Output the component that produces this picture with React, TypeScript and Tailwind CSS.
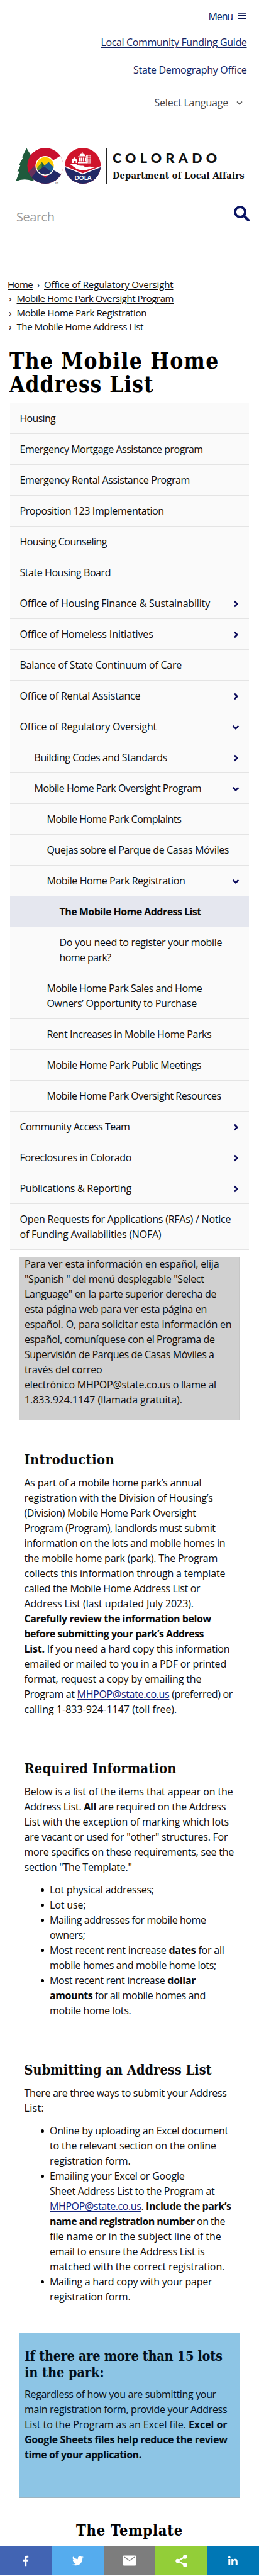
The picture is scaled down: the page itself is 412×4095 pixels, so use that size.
import { useLayoutEffect, useRef, useState } from "react";
import type { ReactNode } from "react";

/** One line of copy whose tracking is adjusted so that it fills its measure. */
function Line({ w, children, className = "" }: { w: number; children: ReactNode; className?: string }) {
  const ref = useRef<HTMLSpanElement>(null);
  const [spacing, setSpacing] = useState(0);
  useLayoutEffect(() => {
    const el = ref.current;
    if (!el) return;
    const letters = (el.textContent ?? "").length;
    setSpacing((w + 1.5 - el.getBoundingClientRect().width) / letters);
  }, [w]);
  return (
    <span className={`block whitespace-nowrap ${className}`}>
      <span ref={ref} style={{ letterSpacing: `${spacing}px` }}>
        {children}
      </span>
    </span>
  );
}

type Row = {
  level: 0 | 1 | 2 | 3;
  lines: [string, number][];
  arrow?: "right" | "down";
  active?: boolean;
  plain?: boolean;
};

const rows: Row[] = [
  { level: 0, lines: [["Housing", 55]] },
  { level: 0, lines: [["Emergency Mortgage Assistance program", 289.7]] },
  { level: 0, lines: [["Emergency Rental Assistance Program", 269]] },
  { level: 0, lines: [["Proposition 123 Implementation", 227.7]] },
  { level: 0, lines: [["Housing Counseling", 137]] },
  { level: 0, lines: [["State Housing Board", 143]] },
  { level: 0, lines: [["Office of Housing Finance & Sustainability", 301]], arrow: "right" },
  { level: 0, lines: [["Office of Homeless Initiatives", 210.7]], arrow: "right" },
  { level: 0, lines: [["Balance of State Continuum of Care", 256]] },
  { level: 0, lines: [["Office of Rental Assistance", 190.3]], arrow: "right" },
  { level: 0, lines: [["Office of Regulatory Oversight", 216]], arrow: "down" },
  { level: 1, lines: [["Building Codes and Standards", 209.7]], arrow: "right" },
  { level: 1, lines: [["Mobile Home Park Oversight Program", 264]], arrow: "down" },
  { level: 2, lines: [["Mobile Home Park Complaints", 212.3]] },
  { level: 2, lines: [["Quejas sobre el Parque de Casas Móviles", 288]] },
  { level: 2, lines: [["Mobile Home Park Registration", 218.3]], arrow: "down", plain: true },
  { level: 3, lines: [["The Mobile Home Address List", 223.7]], active: true },
  { level: 3, lines: [["Do you need to register your mobile", 257.3], ["home park?", 80.7]] },
  { level: 2, lines: [["Mobile Home Park Sales and Home", 245.3], ["Owners’ Opportunity to Purchase", 237]] },
  { level: 2, lines: [["Rent Increases in Mobile Home Parks", 260.3]] },
  { level: 2, lines: [["Mobile Home Park Public Meetings", 244]] },
  { level: 2, lines: [["Mobile Home Park Oversight Resources", 275.7]] },
  { level: 0, lines: [["Community Access Team", 173.3]], arrow: "right" },
  { level: 0, lines: [["Foreclosures in Colorado", 176]], arrow: "right" },
  { level: 0, lines: [["Publications & Reporting", 176]], arrow: "right" },
  { level: 0, lines: [["Open Requests for Applications (RFAs) / Notice", 334.3], ["of Funding Availabilities (NOFA)", 223.3]] },
];

const indent = ["pl-[15.5px]", "pl-[38.5px]", "pl-[58.5px]", "pl-[78.5px]"];

function Arrow({ dir }: { dir: "right" | "down" }) {
  return (
    <svg className="mt-[7px] mr-[15px] h-3 w-3 shrink-0" viewBox="0 0 12 12" fill="none" stroke="#0c0c5c" strokeWidth="2.6">
      {dir === "right" ? <path d="M4 1.6 8.2 6 4 10.4" /> : <path d="M1.6 4 6 8.2 10.4 4" />}
    </svg>
  );
}

function NavRow({ row }: { row: Row }) {
  const bg = row.active ? "bg-[#e5e7ef] font-bold" : "bg-[#fafafa]";
  const border = row.plain ? "border-[#fafafa]" : "border-[#e4e4e4]";
  return (
    <li className={`flex justify-between border-b pt-[12px] pb-[12px] ${indent[row.level]} ${bg} ${border}`}>
      <a>
        {row.lines.map(([t, w]) => (
          <Line key={t} w={w}>{t}</Line>
        ))}
      </a>
      {row.arrow && <Arrow dir={row.arrow} />}
    </li>
  );
}

function Logo() {
  return (
    <svg className="h-[60px] w-[138px] shrink-0" viewBox="24 234 138 60">
      <defs>
        <clipPath id="big-c"><circle cx="72" cy="263.5" r="28.5" /></clipPath>
        <clipPath id="seal"><circle cx="131.7" cy="263.5" r="28.5" /></clipPath>
        <clipPath id="sun"><circle cx="71.8" cy="263.5" r="13.8" /></clipPath>
      </defs>
      <path d="M42.3 235.5 34.8 250.6 37 250 30 262.5 32.8 262 27.6 273 31 272.2 25 288.6Q38 282 53 288L60 262 51 250Z" fill="#1f5a3c" />
      <g clipPath="url(#big-c)">
        <rect x="43" y="234" width="58" height="60" fill="#c8102e" />
        <path d="M40 280 54 265 72 283 88 268 102 280V296H40Z" fill="#232a66" />
        <path d="M42 278 54 264 60 270 47 286Z" fill="#66305c" />
        <path d="M102 244 85 254.5V270.5L102 279.5Z" fill="#fff" />
      </g>
      <circle cx="71.8" cy="263.5" r="15.4" fill="#fff" />
      <g clipPath="url(#sun)">
        <rect x="56" y="247" width="32" height="32" fill="#ffcd00" />
        <path d="M56 271 66.5 257.5 76 270V280H56Z" fill="#5c8f2c" />
        <path d="M62 270 77.5 257.5 88 269V280H62Z" fill="#1f5f91" />
        <path d="m66.5 257.5 4 5.5-4 4Z" fill="#1f5a3c" />
        <path d="M56 275 70 264.5 81 273 88 269V280H56Z" fill="#232a66" />
      </g>
      <text x="87" y="291.5" fontSize="4" className="font-['Lato',sans-serif]" fill="#222">TM</text>
      <g clipPath="url(#seal)">
        <rect x="102" y="234" width="60" height="60" fill="#cf142b" />
        <path d="M102 264.5 131.7 276.5 162 264.5V294H102Z" fill="#232a66" />
        <path d="M102 264.3 131.7 276.3 162 264.3" fill="none" stroke="#fff" strokeWidth="1.6" />
      </g>
      <path d="M112 261.5C117 259 120 260 124 262.5 128 264 131 263 134 264 135.5 265.5 132 266 129 266 136 266.5 141 262.5 151 266.5 145 266 142 270.5 132 270.5 122 270.5 120 266.5 112 261.5Z" fill="#fff" />
      <path d="M124 248.5h14v1.5h-14zM125 250.5h2v6h-2zM128.4 250.5h2v6h-2zM131.8 250.5h2v6h-2zM135 250.5h2v6h-2zM124 257h14v2.5h-14zM126.5 248q0-3.5 4.5-3.8 4.5.3 4.5 3.8zM130.3 242h1.2v3h-1.2z" fill="#fff" />
      <path d="M113.5 254.5 118.5 250 123 254.5V259H120.5V256H118V259H115V255Z" fill="#fff" />
      <path d="M137.5 247h6.5v12h-6.5zM139.7 247v12M141.8 247v12M137.5 250h6.5M137.5 253h6.5M137.5 256h6.5" fill="none" stroke="#fff" strokeWidth=".8" />
      <text x="118.5" y="286.2" fontSize="9.5" fontWeight="900" textLength="27" className="font-['Lato',sans-serif]" fill="#fff">DOLA</text>
    </svg>
  );
}

const Mail = ({ dark = false }: { dark?: boolean }) => (
  <a className={dark ? "underline underline-offset-2" : "text-[#14237d] underline underline-offset-2"}>MHPOP@state.co.us</a>
);

function H2({ w, children }: { w: number; children: ReactNode }) {
  return (
    <h2 className="font-['DejaVu_Serif_Condensed','DejaVu_Serif',serif] text-[21.5px] leading-[25.5px] font-bold [font-stretch:normal]">
      <Line w={w}>{children}</Line>
    </h2>
  );
}

function Item({ children }: { children: ReactNode }) {
  return (
    <li className="flex">
      <span className="mt-[10px] mr-[9px] h-[5.5px] w-[5.5px] shrink-0 rounded-full bg-black" />
      <div>{children}</div>
    </li>
  );
}

export default function App() {
  return (
    <div className="flex h-[4095px] w-[412px] flex-col overflow-hidden bg-white font-['Open_Sans','Lato',sans-serif] text-[16px] leading-6 text-[#0c0c0c] [font-stretch:88%]">
      <header className="h-[440px] shrink-0">
        <div className="flex h-[55px] justify-end pt-[14px] pr-[21px] text-[#14235f]">
          <Line w={37}>Menu</Line>
          <svg className="mt-[5px] ml-[9px] h-[12px] w-[12px]" viewBox="0 0 12 12" stroke="#0a1654" strokeWidth="1.8">
            <path d="M0 1.8h12M0 6h12M0 10.2h12" />
          </svg>
        </div>
        <div className="flex h-[44px] justify-end pr-[19.5px] text-[#14235f] underline underline-offset-2">
          <Line w={230.5}>Local Community Funding Guide</Line>
        </div>
        <div className="flex h-[52px] justify-end pr-[19.5px] text-[#14235f] underline underline-offset-2">
          <Line w={179}>State Demography Office</Line>
        </div>
        <div className="flex h-[83px] justify-end pr-[26px] text-[#444]">
          <Line w={116}>Select Language</Line>
          <svg className="mt-[9px] ml-[13px] h-[8px] w-[10px]" viewBox="0 0 10 8" fill="none" stroke="#555" strokeWidth="1.7">
            <path d="m1 1.5 4 4 4-4" />
          </svg>
        </div>
        <div className="flex h-[92px] pl-6 [font-stretch:normal]">
          <Logo />
          <div className="mt-px ml-[7px] h-[57px] w-px bg-[#222]" />
          <div className="ml-[9px] pt-[4px] text-[#111]">
            <div className="font-['Lato',sans-serif] text-[21.5px] leading-[26px] font-black">
              <Line w={171}>COLORADO</Line>
            </div>
            <div className="pt-[6px] font-['DejaVu_Serif_Condensed','DejaVu_Serif',serif] text-[14.5px] leading-[18px] font-bold">
              <Line w={208}>Department of Local Affairs</Line>
            </div>
          </div>
        </div>
        <div className="flex justify-between pr-[15px] pl-[26px]">
          <div className="pt-[7px] text-[20px] leading-[24px] text-[#999]">
            <Line w={59}>Search</Line>
          </div>
          <svg className="mt-[1px] h-[25px] w-[25px]" viewBox="0 0 25 25" fill="none" stroke="#0a1463">
            <circle cx="10" cy="10" r="8" strokeWidth="3.8" />
            <path d="m16 16 7 7" strokeWidth="4.2" strokeLinecap="round" />
          </svg>
        </div>
      </header>

      <nav className="h-[115px] shrink-0 pt-[1px] pl-3 text-[15px] leading-[22.3px]">
        <div className="flex">
          <Line w={38.5} className="underline underline-offset-2">Home</Line>
          <span className="w-[18px] text-center">›</span>
          <Line w={204} className="underline underline-offset-2">Office of Regulatory Oversight</Line>
        </div>
        <div className="flex">
          <span className="w-[14.5px] pl-[2px]">›</span>
          <Line w={248} className="underline underline-offset-2">Mobile Home Park Oversight Program</Line>
        </div>
        <div className="flex">
          <span className="w-[14.5px] pl-[2px]">›</span>
          <Line w={205} className="underline underline-offset-2">Mobile Home Park Registration</Line>
        </div>
        <div className="flex">
          <span className="w-[14.5px] pl-[2px]">›</span>
          <Line w={200}>The Mobile Home Address List</Line>
        </div>
      </nav>

      <h1 className="h-[86px] shrink-0 pl-[15px] font-['DejaVu_Serif_Condensed','DejaVu_Serif',serif] text-[35px] leading-[37px] font-bold text-black [font-stretch:normal]">
        <Line w={332}>The Mobile Home</Line>
        <Line w={228}>Address List</Line>
      </h1>

      <ul className="mr-4 ml-4 h-[1357px] shrink-0">
        {rows.map((r) => (
          <NavRow key={r.lines[0][0]} row={r} />
        ))}
      </ul>

      <section className="mr-[31px] ml-[30px] h-[260px] shrink-0 border border-[#c6c6c6] bg-[#d0d0d0] pl-[8px]">
        <div className="-mt-[2px]">
          <Line w={308}>Para ver esta información en español, elija</Line>
          <Line w={284}>"Spanish " del menú desplegable "Select</Line>
          <Line w={303.7}>Language" en la parte superior derecha de</Line>
          <Line w={288.7}>esta página web para ver esta página en</Line>
          <Line w={328}>español. O, para solicitar esta información en</Line>
          <Line w={301}>español, comuníquese con el Programa de</Line>
          <Line w={300}>Supervisión de Parques de Casas Móviles a</Line>
          <Line w={122}>través del correo</Line>
          <Line w={303.3}>electrónico <Mail dark /> o llame al</Line>
          <Line w={249.3}>1.833.924.1147 (llamada gratuita).</Line>
        </div>
      </section>

      <section className="h-[491px] shrink-0 pt-[50px] pl-[38.5px]">
        <H2 w={142}>Introduction</H2>
        <div className="pt-[11px]">
          <Line w={280.3}>As part of a mobile home park’s annual</Line>
          <Line w={298.7}>registration with the Division of Housing’s</Line>
          <Line w={271.7}>(Division) Mobile Home Park Oversight</Line>
          <Line w={302.7}>Program (Program), landlords must submit</Line>
          <Line w={318.3}>information on the lots and mobile homes in</Line>
          <Line w={306}>the mobile home park (park). The Program</Line>
          <Line w={318.3}>collects this information through a template</Line>
          <Line w={278.3}>called the Mobile Home Address List or</Line>
          <Line w={268}>Address List (last updated July 2023).</Line>
          <Line w={295.7}><b>Carefully review the information below</b></Line>
          <Line w={284}><b>before submitting your park’s Address</b></Line>
          <Line w={325.3}><b>List.</b> If you need a hard copy this information</Line>
          <Line w={320}>emailed or mailed to you in a PDF or printed</Line>
          <Line w={280.3}>format, request a copy by emailing the</Line>
          <Line w={330}>Program at <Mail /> (preferred) or</Line>
          <Line w={241.3}>calling 1-833-924-1147 (toll free).</Line>
        </div>
      </section>

      <section className="h-[479px] shrink-0 pt-[50px] pl-[38.5px]">
        <H2 w={240.7}>Required Information</H2>
        <div className="pt-[11px]">
          <Line w={330.7}>Below is a list of the items that appear on the</Line>
          <Line w={319.3}>Address List. <b>All</b> are required on the Address</Line>
          <Line w={324}>List with the exception of marking which lots</Line>
          <Line w={322.3}>are vacant or used for "other" structures. For</Line>
          <Line w={332}>more specifics on these requirements, see the</Line>
          <Line w={169.7}>section "The Template."</Line>
        </div>
        <ul className="pt-3 pl-[26px]">
          <Item><Line w={164.3}>Lot physical addresses;</Line></Item>
          <Item><Line w={56}>Lot use;</Line></Item>
          <Item>
            <Line w={247}>Mailing addresses for mobile home</Line>
            <Line w={55}>owners;</Line>
          </Item>
          <Item>
            <Line w={276}>Most recent rent increase <b>dates</b> for all</Line>
            <Line w={263.3}>mobile homes and mobile home lots;</Line>
          </Item>
          <Item>
            <Line w={230.7}>Most recent rent increase <b>dollar</b></Line>
            <Line w={246.3}><b>amounts</b> for all mobile homes and</Line>
            <Line w={128}>mobile home lots.</Line>
          </Item>
        </ul>
      </section>

      <section className="h-[480px] shrink-0 pt-[50px] pl-[38.5px]">
        <H2 w={296.7}>Submitting an Address List</H2>
        <div className="pt-[11px]">
          <Line w={320.7}>There are three ways to submit your Address</Line>
          <Line w={30}>List:</Line>
        </div>
        <ul className="pt-3 pl-[26px]">
          <Item>
            <Line w={282.3}>Online by uploading an Excel document</Line>
            <Line w={263.3}>to the relevant section on the online</Line>
            <Line w={127}>registration form.</Line>
          </Item>
          <Item>
            <Line w={213}>Emailing your Excel or Google</Line>
            <Line w={261}>Sheet Address List to the Program at</Line>
            <Line w={287}><Mail />. <b>Include the park’s</b></Line>
            <Line w={277.3}><b>name and registration number</b> on the</Line>
            <Line w={271.3}>file name or in the subject line of the</Line>
            <Line w={245}>email to ensure the Address List is</Line>
            <Line w={276.7}>matched with the correct registration.</Line>
          </Item>
          <Item>
            <Line w={256.7}>Mailing a hard copy with your paper</Line>
            <Line w={127}>registration form.</Line>
          </Item>
        </ul>
      </section>

      <section className="mr-[30px] ml-[30px] h-[263px] shrink-0 border border-[#9fb4c0] bg-[#8dc5e5] pt-[24px] pl-[8px] text-[#02101c]">
        <H2 w={313}>If there are more than 15 lots</H2>
        <H2 w={125}>in the park:</H2>
        <div className="pt-[10px]">
          <Line w={303.3}>Regardless of how you are submitting your</Line>
          <Line w={320.7}>main registration form, provide your Address</Line>
          <Line w={321}>List to the Program as an Excel file. <b>Excel or</b></Line>
          <Line w={321}><b>Google Sheets files help reduce the review</b></Line>
          <Line w={184.3}><b>time of your application.</b></Line>
        </div>
      </section>

      <h2 className="flex h-[76px] shrink-0 justify-center pt-[37px] font-['DejaVu_Serif_Condensed','DejaVu_Serif',serif] text-[23.5px] leading-[30px] font-bold text-black [font-stretch:normal]">
        <Line w={168.5}>The Template</Line>
      </h2>

      <footer className="grid h-[47px] shrink-0 grid-cols-5">
        <a className="flex items-center justify-center bg-[#4264b3]">
          <svg className="h-[18px] w-[18px]" viewBox="0 0 24 24" fill="#fff">
            <path d="M9.7 23V12.9H6V9h3.700V6c0-3.600 2.200-5 5-5 1.400 0 2.700.2 2.900.3v3.600h-2.100c-1.500 0-1.900.8-1.900 1.900V9h4.100l-.6 3.900h-3.500V23z" />
          </svg>
        </a>
        <a className="flex items-center justify-center bg-[#55acee]">
          <svg className="h-[18px] w-[18px]" viewBox="0 0 24 24" fill="#fff">
            <path d="M23.950 4.570a10 10 0 0 1-2.820.77 4.960 4.960 0 0 0 2.160-2.720c-.95.550-2 .950-3.130 1.180a4.920 4.920 0 0 0-8.380 4.480C7.690 8.090 4.070 6.130 1.640 3.160a4.920 4.920 0 0 0 1.520 6.570 4.900 4.900 0 0 1-2.230-.610v.060a4.920 4.920 0 0 0 3.950 4.830 5 5 0 0 1-2.210.080 4.940 4.940 0 0 0 4.600 3.420A9.870 9.870 0 0 1 0 19.540a14 14 0 0 0 7.550 2.210c9.050 0 14-7.500 14-13.980 0-.210 0-.420-.020-.630a9.940 9.940 0 0 0 2.460-2.550z" />
          </svg>
        </a>
        <a className="flex items-center justify-center bg-[#7d7d7d]">
          <svg className="h-[17px] w-[20px]" viewBox="0 0 20 17">
            <rect y=".5" width="20" height="16" rx="1" fill="#fff" />
            <path d="m2 3 8 5.5L18 3" fill="none" stroke="#7d7d7d" strokeWidth="1.4" />
          </svg>
        </a>
        <a className="flex items-center justify-center bg-[#93ce38]">
          <svg className="h-[20px] w-[19px]" viewBox="0 0 19 20" fill="#fff">
            <path d="M15.5 3.5 3.5 10l12 6.5" fill="none" stroke="#fff" strokeWidth="2.2" />
            <circle cx="15.3" cy="3.5" r="3.2" />
            <circle cx="3.5" cy="10" r="3.2" />
            <circle cx="15.3" cy="16.5" r="3.2" />
          </svg>
        </a>
        <a className="flex items-center justify-center bg-[#0077b5]">
          <svg className="h-[15px] w-[15px]" viewBox="0 0 15 15" fill="#fff">
            <path d="M.3 5h3v9.500h-3zM5.200 5h2.900v1.300C8.600 5.400 9.700 4.700 11.200 4.700c3 0 3.600 2 3.600 4.500v5.300h-3V9.800c0-1.200 0-2.600-1.600-2.600S8.200 8.400 8.200 9.700v4.800h-3z" />
            <circle cx="1.8" cy="2.2" r="1.8" />
          </svg>
        </a>
      </footer>
    </div>
  );
}
